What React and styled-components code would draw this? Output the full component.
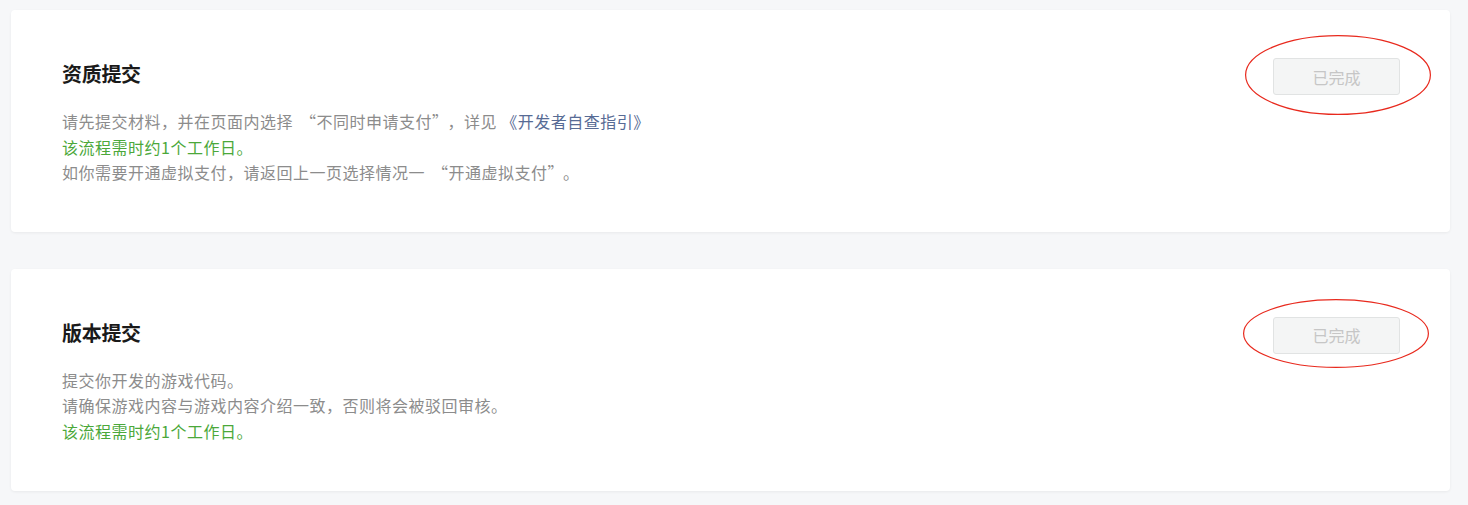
import React from "react";
import styled, { createGlobalStyle } from "styled-components";

const GlobalStyle = createGlobalStyle`
  html, body {
    margin: 0;
    padding: 0;
    background: #f6f7f9;
  }
  body {
    font-family: "Noto Sans CJK SC", "Noto Sans", sans-serif;
  }
`;

const Page = styled.div`
  display: flex;
  flex-direction: column;
  gap: 37px;
  padding: 10px 18px 14px 11px;
`;

const Card = styled.section`
  display: flex;
  justify-content: space-between;
  align-items: flex-start;
  padding: 48px 50px 46px 51px;
  background: #fff;
  border-radius: 4px;
  box-shadow: 0 1px 3px rgba(0, 0, 0, 0.06);
`;

const Body = styled.div`
  display: flex;
  flex-direction: column;
`;

const Title = styled.h3`
  margin: 2px 0 21px;
  font-size: 20px;
  line-height: 28px;
  font-weight: 700;
  letter-spacing: -0.3px;
  color: #1a1a1a;
`;

const Line = styled.p`
  margin: 0;
  font-size: 16px;
  line-height: 25.6px;
  letter-spacing: 0.5px;
  color: ${(p) => (p.$tone === "green" ? "#4ba83a" : "#8c8c8c")};
`;

// curly quotes take a full em box, the mark pushed to the inner side
const Quote = styled.span`
  padding-left: ${(p) => (p.$open ? "7px" : "0")};
  padding-right: ${(p) => (p.$open ? "0" : "7px")};
`;

const Link = styled.a`
  color: #576b95;
  text-decoration: none;
`;

const Action = styled.div`
  position: relative;
`;

const DoneButton = styled.button`
  width: 127px;
  height: 37px;
  padding: 0;
  border: 1px solid #e1e3e3;
  border-radius: 3px;
  background: #f4f5f5;
  color: #c6c6c6;
  font-family: inherit;
  font-size: 16px;
  cursor: not-allowed;
`;

const Mark = styled.svg`
  position: absolute;
  left: ${(p) => p.$x}px;
  top: ${(p) => p.$y}px;
  overflow: visible;
  pointer-events: none;
`;

function Circled({ x, y, w, h }) {
  return (
    <Mark $x={x} $y={y} width={w} height={h}>
      <ellipse
        cx={w / 2}
        cy={h / 2}
        rx={w / 2 - 0.6}
        ry={h / 2 - 0.6}
        fill="none"
        stroke="#e8291d"
        strokeWidth="1.2"
      />
    </Mark>
  );
}

function Text({ children }) {
  return children
    .split(/([“”])/)
    .map((part, i) =>
      part === "“" || part === "”" ? (
        <Quote key={i} $open={part === "“"}>
          {part}
        </Quote>
      ) : (
        part
      )
    );
}

const steps = [
  {
    title: "资质提交",
    lines: [
      {
        text: "请先提交材料，并在页面内选择“不同时申请支付”，详见 ",
        link: "《开发者自查指引》",
      },
      { text: "该流程需时约1个工作日。", tone: "green" },
      { text: "如你需要开通虚拟支付，请返回上一页选择情况一“开通虚拟支付”。" },
    ],
    mark: { x: -28, y: -23, w: 186, h: 80 },
  },
  {
    title: "版本提交",
    lines: [
      { text: "提交你开发的游戏代码。" },
      { text: "请确保游戏内容与游戏内容介绍一致，否则将会被驳回审核。" },
      { text: "该流程需时约1个工作日。", tone: "green" },
    ],
    mark: { x: -30, y: -18, w: 186, h: 69 },
  },
];

export default function App() {
  return (
    <>
      <GlobalStyle />
      <Page lang="zh-CN">
        {steps.map((step) => (
          <Card key={step.title}>
            <Body>
              <Title>{step.title}</Title>
              {step.lines.map((line, i) => (
                <Line key={i} $tone={line.tone}>
                  <Text>{line.text}</Text>
                  {line.link && <Link href="#">{line.link}</Link>}
                </Line>
              ))}
            </Body>
            <Action>
              <DoneButton disabled>已完成</DoneButton>
              <Circled {...step.mark} />
            </Action>
          </Card>
        ))}
      </Page>
    </>
  );
}
